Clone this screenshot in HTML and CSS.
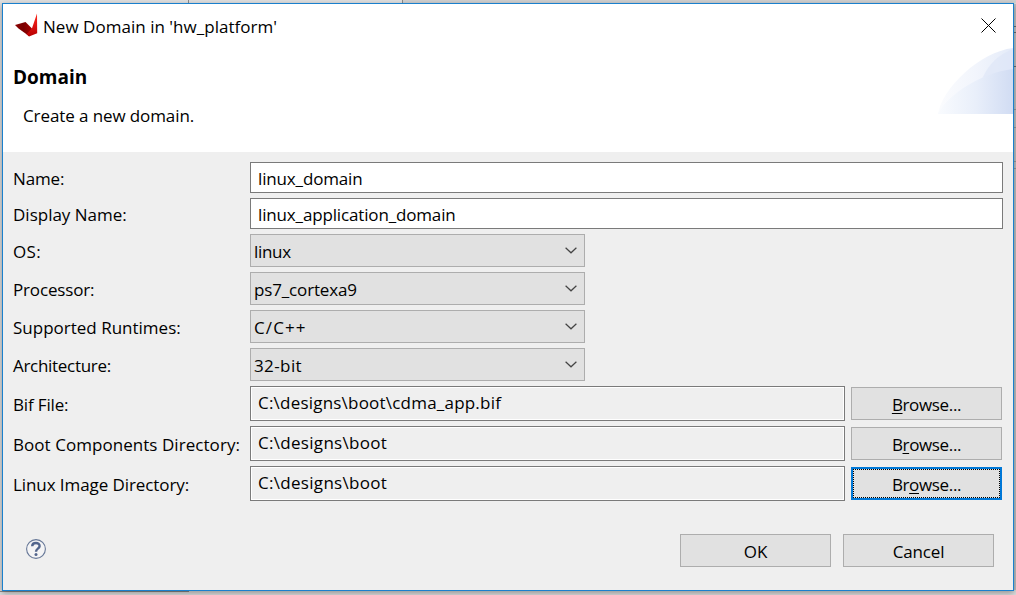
FILE: index.html
```html
<!DOCTYPE html>
<html lang="en">
<head>
<meta charset="utf-8">
<title>New Domain in 'hw_platform'</title>
<link rel="stylesheet" href="styles.css">
</head>
<body>
<svg class="backdrop" width="1016" height="595" viewBox="0 0 1016 595" shape-rendering="crispEdges">
  <path fill="#e0e0e0" d="M0 0h402v3H0z"/>
  <path fill="#d0d0d0" d="M403 0h613v3H403z"/>
  <path fill="#8a8a8a" d="M188 0h1v3h-1zM402 0h1v3h-1zM0 591h189v1H0z"/>
  <path fill="#bcbfc1" d="M1014 4h2v586h-2z"/>
  <path fill="#666b70" d="M1014 26h2v1h-2zM1014 32h2v1h-2zM1014 66h2v1h-2z"/>
  <path fill="#94989b" d="M1014 109h2v1h-2zM1014 127h2v1h-2zM1014 161h2v1h-2zM1014 168h2v1h-2z"/>
</svg>
<main class="dialog">
  <header class="header">
    <div class="titlebar">
      <svg class="logo" width="23" height="24" viewBox="0 0 23 24">
        <defs>
          <linearGradient id="wing" x1="0" y1="0" x2="1" y2="0"><stop offset="0" stop-color="#8c0000"/><stop offset=".5" stop-color="#790000"/><stop offset="1" stop-color="#a80000"/></linearGradient>
          <linearGradient id="tip" x1="0" y1="0" x2="0" y2="1"><stop offset="0" stop-color="#ff2a1c"/><stop offset=".6" stop-color="#d80f0f"/><stop offset="1" stop-color="#b50000"/></linearGradient>
        </defs>
        <path fill="url(#wing)" d="M0 12 10.5 9 17 15.5 14 23 3.5 15.5z"/>
        <path fill="url(#tip)" d="M22 0.5 22.2 20.3 14 23.6 11.5 21.3 17 15.2z"/>
      </svg>
      <span class="title">New Domain in 'hw_platform'</span>
      <svg class="close" width="15" height="15" viewBox="0 0 15 15"><path d="M.5.5l14 14M14.5.5l-14 14" stroke="#000" stroke-width="1"/></svg>
    </div>
    <h1 class="heading">Domain</h1>
    <p class="description">Create a new domain.</p>
    <svg class="banner" width="75" height="66" viewBox="0 0 75 66">
      <defs>
        <linearGradient id="fan" x1="0" y1="0" x2="1" y2="0"><stop offset="0" stop-color="#fbfcfe"/><stop offset=".5" stop-color="#f2f5fc"/><stop offset="1" stop-color="#e4ebf9"/></linearGradient>
        <linearGradient id="fan2" x1="0" y1="0" x2="1" y2="0"><stop offset="0" stop-color="#f9fbfe"/><stop offset=".5" stop-color="#e9effa"/><stop offset="1" stop-color="#d1dcf3"/></linearGradient>
      </defs>
      <path fill="url(#fan)" d="M0 66C4 40 42 4 75 0v66z"/>
      <path fill="#dce5f7" opacity=".6" d="M45 29Q54 9 75 1v30z"/>
      <path fill="url(#fan2)" d="M0 66C8 48 42 25 75 21v45z"/>
    </svg>
  </header>
  <form class="form">
    <span class="label snug">Name:</span><div class="field wide"><span class="snug">linux_domain</span></div>
    <span class="label">Display Name:</span><div class="field wide"><span class="snug">linux_application_domain</span></div>
    <span class="label airy">OS:</span><div class="combo"><span class="tight">linux</span><svg class="chevron" width="12" height="7" viewBox="0 0 12 7"><path d="M.6.7 6 5.8 11.4.7"/></svg></div>
    <span class="label snug">Processor:</span><div class="combo"><span class="snug">ps7_cortexa9</span><svg class="chevron" width="12" height="7" viewBox="0 0 12 7"><path d="M.6.7 6 5.8 11.4.7"/></svg></div>
    <span class="label">Supported Runtimes:</span><div class="combo"><span class="spread">C/C++</span><svg class="chevron" width="12" height="7" viewBox="0 0 12 7"><path d="M.6.7 6 5.8 11.4.7"/></svg></div>
    <span class="label tight">Architecture:</span><div class="combo"><span class="airy">32-bit</span><svg class="chevron" width="12" height="7" viewBox="0 0 12 7"><path d="M.6.7 6 5.8 11.4.7"/></svg></div>
    <span class="label snug">Bif File:</span><div class="field readonly"><span>C:\designs\boot\cdma_app.bif</span></div><div class="button"><span class="browse"><u>B</u>rowse...</span></div>
    <span class="label loose">Boot Components Directory:</span><div class="field readonly"><span class="path">C:\designs\boot</span></div><div class="button"><span class="browse">B<u>r</u>owse...</span></div>
    <span class="label slim">Linux Image Directory:</span><div class="field readonly"><span class="path">C:\designs\boot</span></div><div class="button focused"><span class="browse">Br<u>o</u>wse...</span></div>
  </form>
  <footer class="footer">
    <svg class="help" width="20" height="20" viewBox="0 0 20 20">
      <circle cx="10" cy="10" r="9.4" fill="#f4f4f5" stroke="#667797" stroke-width="1.1"/>
      <path d="M6.2 7.3C6.3 2.8 13.7 3 13.6 7.1 13.5 9.8 10 9.6 10 12.7" fill="none" stroke="#52658c" stroke-width="2.4"/>
      <circle cx="10" cy="15.4" r="1.5" fill="#52658c"/>
    </svg>
    <div class="button"><span>OK</span></div>
    <div class="button"><span class="snug">Cancel</span></div>
  </footer>
</main>
</body>
</html>
```
FILE: styles.css
```css
* { box-sizing: border-box; }
body {
  margin: 0;
  width: 1016px;
  height: 595px;
  padding: 3px 2px;
  overflow: hidden;
  background: #dcdcdc;
  color: #000;
  font: 17px/24px "Open Sans", "Noto Sans", sans-serif;
}
.backdrop { position: absolute; left: 0; top: 0; }
.dialog {
  position: relative;
  width: 1012px;
  height: 588px;
  border: 1px solid #1a80cd;
  background: #efefef;
  box-shadow: 0 2px 6px rgba(0, 0, 0, .35);
}
.header { position: relative; height: 148px; background: #fff; }
.titlebar { display: flex; align-items: flex-start; height: 60px; padding: 9px 14px 0 12px; }
.title { margin: 2px 0 0 5px; letter-spacing: .03px; }
.close { margin: 5px 3px 0 auto; }
.heading { margin: 0 0 0 10px; font-size: 19px; line-height: 26px; font-weight: 700; }
.description { margin: 14px 0 0 20px; letter-spacing: -.1px; }
.banner { position: absolute; right: 0; top: 44px; }
.form {
  display: grid;
  grid-template-columns: 237px 595px 151px;
  grid-template-rows: 31px 31px repeat(4, 33px) repeat(3, 35px);
  column-gap: 0;
  row-gap: 5px;
  padding: 10px 0 0 10px;
}
.label { grid-column: 1; align-self: center; padding-top: 2px; white-space: nowrap; }
.field {
  display: flex;
  align-items: center;
  padding: 2px 0 0 7px;
  border: 1px solid #7a7a7a;
  background: #fff;
}
.wide { grid-column: 2 / 4; width: 753px; }
.readonly {
  padding: 0 0 1px 7px;
  background: #efefef;
  box-shadow: inset 0 0 0 1px #fff;
  letter-spacing: .21px;
}
.combo {
  grid-column: 2;
  display: flex;
  align-items: center;
  justify-content: space-between;
  width: 335px;
  padding: 2px 7px 0 3px;
  border: 1px solid #adadad;
  background: #e1e1e1;
}
.chevron { margin-top: -2px; }
.chevron path { fill: none; stroke: #444; stroke-width: 1.2; }
.button {
  display: flex;
  align-items: center;
  justify-content: center;
  align-self: center;
  width: 151px;
  height: 33px;
  padding-top: 2px;
  border: 1px solid #adadad;
  background: #e1e1e1;
}
.form .button { margin-left: 6px; }
.focused {
  padding-top: 0;
  border: 2px solid #0078d7;
  outline: 1px dotted #000;
  outline-offset: -3px;
}
.focused .browse { padding-top: 2px; }
.browse { letter-spacing: -.35px; }
u { text-decoration-thickness: 1px; text-underline-offset: 2px; }

/* Tracking steps */
.tight { letter-spacing: -.3px; }
.snug { letter-spacing: -.15px; }
.slim { letter-spacing: -.08px; }
.loose { letter-spacing: .05px; }
.path { letter-spacing: .3px; }
.airy { letter-spacing: .4px; }
.spread { letter-spacing: 1.1px; }

.footer { display: flex; align-items: center; gap: 12px; padding: 33px 19px 0 23px; }
.help { margin: -3px auto 0 0; }
```
